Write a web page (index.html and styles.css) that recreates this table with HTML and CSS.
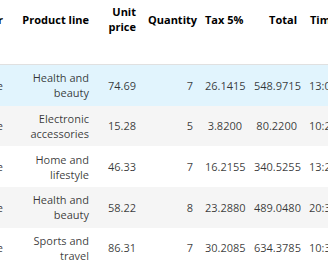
FILE: index.html
```html
<!DOCTYPE html>
<html lang="en">
<head>
    <meta charset="UTF-8">
    <title>Sales preview</title>
    <link rel="stylesheet" href="styles.css">
</head>
<body>
    <div class="output-area">
        <table class="dataframe">
            <colgroup>
                <col class="col-gender">
                <col class="col-product">
                <col class="col-price">
                <col class="col-qty">
                <col class="col-tax">
                <col class="col-total">
                <col class="col-time">
            </colgroup>
            <thead>
                <tr>
                    <th>Gender</th>
                    <th class="nowrap">Product line</th>
                    <th>Unit price</th>
                    <th>Quantity</th>
                    <th class="nowrap">Tax 5%</th>
                    <th>Total</th>
                    <th>Time</th>
                </tr>
            </thead>
            <tbody>
                <tr class="hovered">
                    <td>Female</td>
                    <td>Health and beauty</td>
                    <td>74.69</td>
                    <td>7</td>
                    <td>26.1415</td>
                    <td>548.9715</td>
                    <td>13:08</td>
                </tr>
                <tr>
                    <td>Female</td>
                    <td>Electronic accessories</td>
                    <td>15.28</td>
                    <td>5</td>
                    <td>3.8200</td>
                    <td>80.2200</td>
                    <td>10:29</td>
                </tr>
                <tr>
                    <td>Male</td>
                    <td>Home and lifestyle</td>
                    <td>46.33</td>
                    <td>7</td>
                    <td>16.2155</td>
                    <td>340.5255</td>
                    <td>13:23</td>
                </tr>
                <tr>
                    <td>Male</td>
                    <td>Health and beauty</td>
                    <td>58.22</td>
                    <td>8</td>
                    <td>23.2880</td>
                    <td>489.0480</td>
                    <td>20:33</td>
                </tr>
                <tr>
                    <td>Male</td>
                    <td>Sports and travel</td>
                    <td>86.31</td>
                    <td>7</td>
                    <td>30.2085</td>
                    <td>634.3785</td>
                    <td>10:37</td>
                </tr>
            </tbody>
        </table>
    </div>
</body>
</html>
```

FILE: styles.css
```css
body {
    margin: 0;
    font-family: 'Open Sans', 'Noto Sans', Arial, sans-serif;
    font-size: 11px;
    background: #fff;
    color: rgba(0, 0, 0, 0.78);
}
.output-area {
    overflow: hidden;
    width: 100%;
}
.dataframe {
    table-layout: fixed;
    border-collapse: collapse;
    border-spacing: 0;
    width: 394px;
    margin-left: -51px;
}
.col-gender { width: 60px; }
.col-product { width: 86px; }
.col-price { width: 47px; }
.col-qty { width: 57px; }
.col-tax { width: 49px; }
.col-total { width: 55px; }
.col-time { width: 40px; }
.dataframe th,
.dataframe td {
    text-align: right;
    line-height: 15px;
}
.dataframe th {
    color: #000;
    font-weight: 700;
    height: 38px;
    padding: 0 6px 26px;
    vertical-align: middle;
    border-bottom: 1px solid #e0e0e0;
}
.dataframe th.nowrap {
    white-space: nowrap;
}
.dataframe td {
    padding: 5.33px 6px;
    vertical-align: middle;
}
.dataframe tbody tr:nth-child(even) {
    background: #f5f5f5;
}
.dataframe tbody tr.hovered {
    background: #e1f4fd;
}
```
